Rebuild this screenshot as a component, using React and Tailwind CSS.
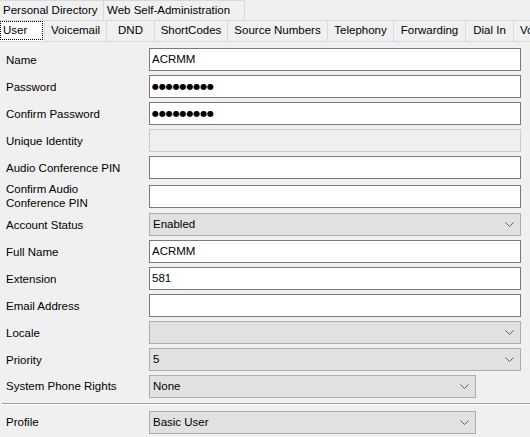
import React from 'react';

const topTabs = [
  { label: 'Personal Directory', w: 'w-[104px]' },
  { label: 'Web Self-Administration', w: 'w-[141px]' },
];

const subTabs = [
  { label: 'User', w: 'w-[45px]', active: true },
  { label: 'Voicemail', w: 'w-[62px]' },
  { label: 'DND', w: 'w-[48px]' },
  { label: 'ShortCodes', w: 'w-[73px]' },
  { label: 'Source Numbers', w: 'w-[100px]' },
  { label: 'Telephony', w: 'w-[66px]' },
  { label: 'Forwarding', w: 'w-[72px]' },
  { label: 'Dial In', w: 'w-[48px]' },
  { label: 'Voicemail', w: 'w-[62px]' },
];

const Chevron = () => (
  <svg width="9" height="5" viewBox="0 0 9 5" className="shrink-0">
    <path d="M0.5 0.5 L4.5 4.5 L8.5 0.5" fill="none" stroke="#606060" strokeWidth="1" />
  </svg>
);

// caja de texto blanca
const TextBox = ({ value, dots }) => (
  <div className="w-[372px] h-[23px] bg-white border border-[#7a7a7a] flex items-center px-[2px]">
    {dots ? (
      <span className="font-['DejaVu_Sans'] text-[8px] tracking-[-0.1px] leading-none">●●●●●●●●●</span>
    ) : (
      <span>{value}</span>
    )}
  </div>
);

const SelectBox = ({ value, narrow }) => (
  <div
    className={`${narrow ? 'w-[327px]' : 'w-[372px]'} h-[23px] bg-[#e1e1e1] border border-[#adadad] flex items-center justify-between pl-[3px] pr-[6px]`}
  >
    <span>{value}</span>
    <Chevron />
  </div>
);

const Row = ({ label, children, tall }) => (
  <div className={`flex items-center ${tall ? 'h-[26px]' : 'h-[23px]'} mb-[4px]`}>
    <div className="w-[149px] pl-[6px] leading-[14px]">{label}</div>
    {children}
  </div>
);

export default function App() {
  return (
    <div className="w-[530px] h-[437px] bg-[#f0f0f0] overflow-hidden font-['Liberation_Sans',sans-serif] text-[11.5px] text-black">
      {/* pestañas superiores */}
      <div className="flex h-[20px]">
        {topTabs.map((t) => (
          <div
            key={t.label}
            className={`${t.w} shrink-0 h-full border-t border-r border-[#d9d9d9] flex items-center pl-[3px] whitespace-nowrap`}
          >
            {t.label}
          </div>
        ))}
      </div>

      <div className="flex h-[22px] border-b border-[#d9d9d9] overflow-hidden">
        {subTabs.map((t, i) => (
          <div
            key={i}
            className={`${t.w} shrink-0 h-full border-t border-r border-[#d9d9d9] flex items-center whitespace-nowrap ${
              t.active ? 'bg-white pl-[3px] items-start pt-[2px]' : 'justify-center'
            }`}
          >
            {t.active ? (
              <span className="border border-dotted border-black h-[19px] w-[43px] -ml-[3px] -mt-[2px] pl-[2px] leading-[17px]">
                {t.label}
              </span>
            ) : (
              t.label
            )}
          </div>
        ))}
      </div>

      {/* formulario */}
      <div className="pt-[6px]">
        <Row label="Name"><TextBox value="ACRMM" /></Row>
        <Row label="Password"><TextBox dots /></Row>
        <Row label="Confirm Password"><TextBox dots /></Row>
        <Row label="Unique Identity">
          <div className="w-[372px] h-[23px] bg-[#efefef] border border-[#cccccc]" />
        </Row>
        <Row label="Audio Conference PIN"><TextBox value="" /></Row>
        <Row label={<>Confirm Audio<br />Conference PIN</>} tall><TextBox value="" /></Row>
        <Row label="Account Status"><SelectBox value="Enabled" /></Row>
        <Row label="Full Name"><TextBox value="ACRMM" /></Row>
        <Row label="Extension"><TextBox value="581" /></Row>
        <Row label="Email Address"><TextBox value="" /></Row>
        <Row label="Locale"><SelectBox value="" /></Row>
        <Row label="Priority"><SelectBox value="5" /></Row>
        <div className="flex items-center h-[23px]">
          <div className="w-[149px] pl-[6px]">System Phone Rights</div>
          <SelectBox value="None" narrow />
        </div>
        <div className="ml-[2px] mt-[5px] border-t border-[#a0a0a0] border-b border-b-white" />
        <div className="flex items-center h-[23px] mt-[6px]">
          <div className="w-[149px] pl-[6px]">Profile</div>
          <SelectBox value="Basic User" narrow />
        </div>
      </div>
    </div>
  );
}
